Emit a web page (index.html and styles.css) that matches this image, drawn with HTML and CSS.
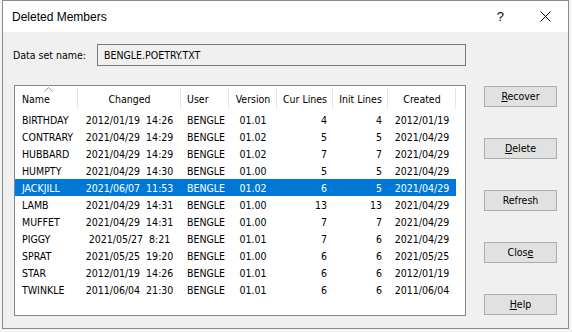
FILE: index.html
```html
<!DOCTYPE html>
<html lang="en">
<head>
    <meta charset="UTF-8">
    <meta name="viewport" content="width=device-width, initial-scale=1.0">
    <title>Deleted Members</title>
    <link rel="stylesheet" href="styles.css">
</head>
<body>
    <div class="window">
        <div class="titlebar">
            <span class="title">Deleted Members</span>
            <span class="help-btn">?</span>
            <span class="close-btn">
                <svg width="11" height="11" viewBox="0 0 11 11"><path d="M0.5 0.5L10.5 10.5M10.5 0.5L0.5 10.5" stroke="#000" stroke-width="1" fill="none"/></svg>
            </span>
        </div>
        <div class="content">
            <div class="dsn-row">
                <span class="dsn-label">Data set name:</span>
                <div class="dsn-field">BENGLE.POETRY.TXT</div>
            </div>
            <div class="main-row">
                <div class="listbox">
                    <table class="members">
                        <colgroup>
                            <col style="width:63px">
                            <col style="width:103px">
                            <col style="width:48px">
                            <col style="width:48px">
                            <col style="width:56px">
                            <col style="width:55px">
                            <col style="width:68px">
                            <col>
                        </colgroup>
                        <thead>
                            <tr>
                                <th class="col-name">
                                    <svg class="sort-arrow" width="9" height="5" viewBox="0 0 9 5"><polyline points="0.5,4.5 4.5,0.5 8.5,4.5" stroke="#9a9a9a" fill="none"/></svg>
                                    Name
                                </th>
                                <th>Changed</th>
                                <th class="col-user">User</th>
                                <th>Version</th>
                                <th>Cur Lines</th>
                                <th>Init Lines</th>
                                <th>Created</th>
                                <th class="fill"></th>
                            </tr>
                        </thead>
                        <tbody>
                            <tr><td class="col-name">BIRTHDAY</td><td>2012/01/19  14:26</td><td class="col-user">BENGLE</td><td>01.01</td><td class="num">4</td><td class="num">4</td><td>2012/01/19</td><td class="fill"></td></tr>
                            <tr><td class="col-name">CONTRARY</td><td>2021/04/29  14:29</td><td class="col-user">BENGLE</td><td>01.02</td><td class="num">5</td><td class="num">5</td><td>2021/04/29</td><td class="fill"></td></tr>
                            <tr><td class="col-name">HUBBARD</td><td>2021/04/29  14:29</td><td class="col-user">BENGLE</td><td>01.02</td><td class="num">7</td><td class="num">7</td><td>2021/04/29</td><td class="fill"></td></tr>
                            <tr><td class="col-name">HUMPTY</td><td>2021/04/29  14:30</td><td class="col-user">BENGLE</td><td>01.00</td><td class="num">5</td><td class="num">5</td><td>2021/04/29</td><td class="fill"></td></tr>
                            <tr class="selected"><td class="col-name">JACKJILL</td><td>2021/06/07  11:53</td><td class="col-user">BENGLE</td><td>01.02</td><td class="num">6</td><td class="num">5</td><td>2021/04/29</td><td class="fill"></td></tr>
                            <tr><td class="col-name">LAMB</td><td>2021/04/29  14:31</td><td class="col-user">BENGLE</td><td>01.00</td><td class="num">13</td><td class="num">13</td><td>2021/04/29</td><td class="fill"></td></tr>
                            <tr><td class="col-name">MUFFET</td><td>2021/04/29  14:31</td><td class="col-user">BENGLE</td><td>01.00</td><td class="num">7</td><td class="num">7</td><td>2021/04/29</td><td class="fill"></td></tr>
                            <tr><td class="col-name">PIGGY</td><td>2021/05/27  8:21</td><td class="col-user">BENGLE</td><td>01.01</td><td class="num">7</td><td class="num">6</td><td>2021/04/29</td><td class="fill"></td></tr>
                            <tr><td class="col-name">SPRAT</td><td>2021/05/25  19:20</td><td class="col-user">BENGLE</td><td>01.00</td><td class="num">6</td><td class="num">6</td><td>2021/05/25</td><td class="fill"></td></tr>
                            <tr><td class="col-name">STAR</td><td>2012/01/19  14:26</td><td class="col-user">BENGLE</td><td>01.01</td><td class="num">6</td><td class="num">6</td><td>2012/01/19</td><td class="fill"></td></tr>
                            <tr><td class="col-name">TWINKLE</td><td>2011/06/04  21:30</td><td class="col-user">BENGLE</td><td>01.01</td><td class="num">6</td><td class="num">6</td><td>2011/06/04</td><td class="fill"></td></tr>
                        </tbody>
                    </table>
                </div>
                <div class="buttons">
                    <div class="btn"><u>R</u>ecover</div>
                    <div class="btn"><u>D</u>elete</div>
                    <div class="btn">Refresh</div>
                    <div class="btn">Clos<u>e</u></div>
                    <div class="btn"><u>H</u>elp</div>
                </div>
            </div>
        </div>
    </div>
</body>
</html>
```

FILE: styles.css
```css
body {
    margin: 0;
    padding: 0;
    background-color: #f4f4f4;
    font-family: "DejaVu Sans Condensed", "DejaVu Sans", sans-serif;
    font-stretch: condensed;
    font-size: 10.5px;
    color: #000;
}

.window {
    width: 565px;
    height: 327px;
    margin: 0 3px 3px 2px;
    border: 1px solid #8a8a8a;
    background-color: #f0f0f0;
}

.titlebar {
    display: flex;
    align-items: center;
    height: 31px;
    background-color: #fff;
    padding: 0 17px 0 9px;
    font-family: "Liberation Sans", Arial, sans-serif;
    font-stretch: normal;
}

.title {
    font-size: 12px;
}

.help-btn {
    margin-left: auto;
    margin-right: 36px;
    font-size: 13px;
}

.close-btn svg {
    display: block;
}

.content {
    padding: 12px 0 0 10px;
}

.dsn-row {
    display: flex;
    align-items: center;
    height: 22px;
}

.dsn-label {
    width: 84px;
}

.dsn-field {
    box-sizing: border-box;
    width: 369px;
    height: 22px;
    line-height: 20px;
    padding-left: 6px;
    border: 1px solid #7a7a7a;
    background-color: #f0f0f0;
}

.main-row {
    display: flex;
    margin-top: 19px;
    margin-left: 1px;
}

.listbox {
    box-sizing: border-box;
    width: 452px;
    height: 231px;
    border: 1px solid #828790;
    background-color: #fff;
}

.members {
    width: 450px;
    table-layout: fixed;
    border-collapse: collapse;
    font-size: 10.5px;
}

.members th {
    height: 25px;
    padding: 0;
    font-weight: normal;
    text-align: center;
    white-space: nowrap;
    background: linear-gradient(#e5e5e5, #e5e5e5) right 2px / 1px 21px no-repeat;
}

.members th.fill {
    background: none;
}

.members th.col-name {
    position: relative;
}

.sort-arrow {
    position: absolute;
    left: 29px;
    top: 1px;
}

.members td {
    height: 17px;
    padding: 0;
    text-align: center;
    white-space: pre;
}

.members .col-name {
    text-align: left;
    padding-left: 7px;
}

.members .col-user {
    text-align: left;
    padding-left: 6px;
}

.members td.num {
    text-align: right;
    padding-right: 6px;
}

.members tr.selected td {
    background-color: #0078d7;
    color: #fff;
}

.members tr.selected td.fill {
    background-color: #fff;
}

.buttons {
    display: flex;
    flex-direction: column;
    gap: 31px;
    margin-left: 18px;
    padding-top: 1px;
}

.btn {
    box-sizing: border-box;
    width: 73px;
    height: 21px;
    line-height: 19px;
    text-align: center;
    background-color: #e1e1e1;
    border: 1px solid #adadad;
}
```
